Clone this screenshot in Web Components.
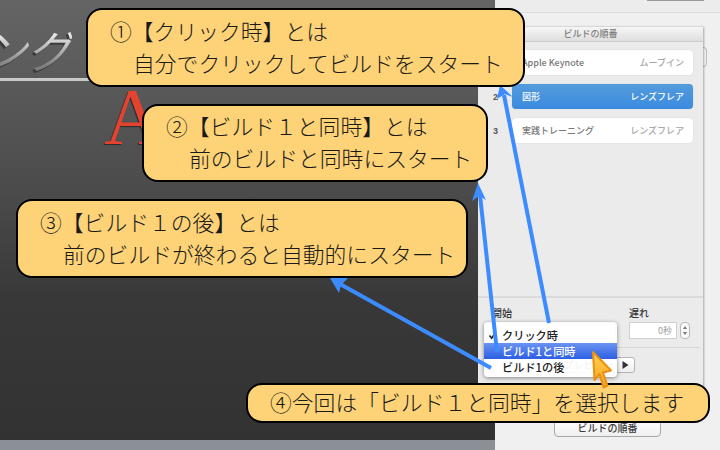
<!DOCTYPE html>
<html lang="ja">
<head>
<meta charset="utf-8">
<title>ビルドの順番</title>
<style>
  html, body { margin: 0; padding: 0; background: #8b9097; }
  body { font-family: "Noto Sans CJK JP", "Noto Sans", sans-serif; }
</style>
</head>
<body>
<guide-page>
  <slide-pane></slide-pane>
  <side-pane></side-pane>
  <build-panel>
    <build-row slot="rows" index="" title="Apple Keynote" effect="ムーブイン"></build-row>
    <build-row slot="rows" index="2" title="図形" effect="レンズフレア" active></build-row>
    <build-row slot="rows" index="3" title="実践トレーニング" effect="レンズフレア"></build-row>
  </build-panel>
  <guide-arrows></guide-arrows>
  <guide-note style="left:86px;top:8px;width:439px;height:79px">
    <span>①【クリック時】とは</span>
    <span slot="detail">自分でクリックしてビルドをスタート</span>
  </guide-note>
  <guide-note style="left:142px;top:104px;width:346px;height:78px">
    <span>②【ビルド１と同時】とは</span>
    <span slot="detail">前のビルドと同時にスタート</span>
  </guide-note>
  <guide-note style="left:16px;top:199px;width:452px;height:79px">
    <span>③【ビルド１の後】とは</span>
    <span slot="detail">前のビルドが終わると自動的にスタート</span>
  </guide-note>
  <guide-note style="left:246px;top:383px;width:464px;height:40px">
    <span>④今回は「ビルド１と同時」を選択します</span>
  </guide-note>
  <guide-cursor></guide-cursor>
</guide-page>

<script>
const define = (name, element) => {
  if (!customElements.get(name)) {
    customElements.define(name, element);
  }
};

class ShadowPart extends HTMLElement {
  connectedCallback() {
    if (this.shadowRoot) return;
    this.attachShadow({ mode: "open" }).innerHTML = this.render();
  }
}

class GuidePage extends ShadowPart {
  render() {
    return `
      <style>
        :host {
          display: grid;
          grid-template-columns: 495px 225px;
          position: relative;
          width: 720px;
          height: 450px;
          overflow: hidden;
        }
      </style>
      <slot></slot>
    `;
  }
}

class SlidePane extends ShadowPart {
  render() {
    return `
      <style>
        :host {
          display: block;
          position: relative;
          height: 450px;
          background: #8b9097;
          overflow: hidden;
        }
        .slide {
          position: absolute;
          inset: 0 0 10px 0;
          background: linear-gradient(180deg, #656565 0, #4b4b4b 190px, #383838 300px, #323232 100%);
        }
        .title {
          position: absolute;
          left: -18px;
          top: 20px;
          font: italic 400 45px/58px "Noto Sans CJK JP", sans-serif;
          background: linear-gradient(180deg, #e8e8e8 25%, #7c7c7c 80%);
          -webkit-background-clip: text;
          background-clip: text;
          color: transparent;
          filter: drop-shadow(-2px 2px 0 #3a3a3a);
        }
        .rule {
          position: absolute;
          left: 0;
          right: 0;
          top: 78px;
          height: 3px;
          background: #c9c9c9;
        }
        .letter {
          position: absolute;
          left: 104px;
          top: 71px;
          font: 400 80px/92px "Liberation Serif", serif;
          color: #e4432f;
          text-shadow: -1px 1px 1px #2b2b2b;
        }
      </style>
      <div class="slide">
        <div class="title">ング</div>
        <div class="rule"></div>
        <div class="letter">A</div>
      </div>
    `;
  }
}

class SidePane extends ShadowPart {
  render() {
    return `
      <style>
        :host {
          display: flex;
          flex-direction: column;
          height: 450px;
          background: #f0f0f0;
          box-sizing: border-box;
        }
        .strip {
          height: 12px;
          background: #ececec;
          border-bottom: 1px solid #dcdcdc;
        }
        .tab {
          margin-left: 152px;
          width: 57px;
          height: 1px;
          background: #9a9a9a;
        }
        .fill { flex: 1; }
        button {
          align-self: center;
          box-sizing: border-box;
          width: 107px;
          height: 18px;
          margin-bottom: 13px;
          padding: 0;
          border: 1px solid #a9a9a9;
          border-radius: 4px;
          background: linear-gradient(180deg, #ffffff, #efefef);
          color: #3a3a3a;
          font: 500 10px/14px "Noto Sans CJK JP", sans-serif;
        }
        .stub {
          position: absolute;
          left: 703px;
          top: 47px;
          width: 3px;
          height: 18px;
          border: 1px solid #bdbdbd;
          border-left: 0;
          border-radius: 0 4px 4px 0;
          background: #f3f3f3;
        }
      </style>
      <div class="strip"><div class="tab"></div></div>
      <div class="stub"></div>
      <div class="fill"></div>
      <button type="button">ビルドの順番</button>
    `;
  }
}

class BuildPanel extends ShadowPart {
  render() {
    return `
      <style>
        :host {
          position: absolute;
          left: 478px;
          top: 27px;
          width: 225px;
          height: 378px;
          display: flex;
          flex-direction: column;
          box-sizing: border-box;
          background: #ebebeb;
          box-shadow: 1px 0 2px rgba(0, 0, 0, 0.3);
          color: #333;
          font: 400 9px/12px "Noto Sans CJK JP", sans-serif;
        }
        .head {
          height: 14px;
          line-height: 14px;
          text-align: center;
          color: #7d7d7d;
          font-weight: 500;
          background: linear-gradient(180deg, #f6f6f6, #dfdfdf);
          border-bottom: 1px solid #cbcbcb;
        }
        .rows {
          display: flex;
          flex-direction: column;
          gap: 9px;
          padding: 8px 10px 0 0;
        }
        .timing {
          margin-top: auto;
          border-top: 2px solid #dadada;
          padding: 8px 0 0 6px;
          height: 109px;
          box-sizing: border-box;
          display: grid;
          grid-template-columns: 132px 48px 10px;
          grid-template-rows: 13px 17px auto auto;
          align-content: start;
          column-gap: 13px;
          row-gap: 3px;
        }
        .label {
          font: 500 10px/13px "Noto Sans CJK JP", sans-serif;
          color: #333;
          padding-left: 8px;
        }
        .label.delay { padding-left: 0; grid-column: 2 / 4; }
        .popup {
          position: relative;
          box-sizing: border-box;
          border: 1px solid #b5b5b5;
          border-radius: 4px;
          background: #fff;
        }
        .delay-field {
          box-sizing: border-box;
          border: 1px solid #d0d0d0;
          background: #fff;
          color: #9d9d9d;
          font-size: 9px;
          line-height: 15px;
          text-align: right;
          padding-right: 4px;
        }
        .stepper {
          box-sizing: border-box;
          margin-left: -10px;
          width: 10px;
          border: 1px solid #b9b9b9;
          border-radius: 4px;
          background: #f8f8f8;
        }
        .stepper svg { display: block; }
        .line {
          grid-column: 1 / 4;
          height: 1px;
          background: #d8d8d8;
          margin: 5px 0 0 8px;
        }
        .preview {
          grid-column: 1 / 3;
          display: flex;
          height: 16px;
          width: 145px;
          margin: 6px 0 0 6px;
          box-sizing: border-box;
          border: 1px solid #b5b5b5;
          border-radius: 3px;
          background: linear-gradient(180deg, #fff, #efefef);
        }
        .preview span { flex: 1; text-align: center; padding-left: 70px; line-height: 14px; font-size: 10px; color: #444; }
        .preview i {
          width: 17px;
          border-left: 1px solid #b5b5b5;
          display: flex;
          align-items: center;
          justify-content: center;
        }
        .menu {
          position: absolute;
          left: -1px;
          top: -1px;
          width: 133px;
          height: 55px;
          box-sizing: border-box;
          padding-top: 5px;
          border-radius: 4px;
          background: rgba(255, 255, 255, 0.93);
          box-shadow: 0 1px 4px rgba(0, 0, 0, 0.45);
          font: 500 11.2px/16px "Noto Sans CJK JP", sans-serif;
          color: #222;
        }
        .menu div { position: relative; height: 16px; padding-left: 18px; }
        .menu .on {
          color: #fff;
          background: linear-gradient(180deg, #6a93f2, #2c5fe3);
        }
        .menu svg { position: absolute; left: 4px; top: 4px; }
      </style>
      <div class="head">ビルドの順番</div>
      <div class="rows"><slot name="rows"></slot></div>
      <div class="timing">
        <div class="label">開始</div>
        <div class="label delay">遅れ</div>
        <div class="popup">
          <div class="menu">
            <div>
              <svg width="9" height="9" viewBox="0 0 9 9"><path d="M1.5 4.5 L3.6 7.2 L7.6 1.5" fill="none" stroke="#222" stroke-width="1.6"/></svg>
              クリック時
            </div>
            <div class="on">ビルド1と同時</div>
            <div>ビルド1の後</div>
          </div>
        </div>
        <div class="delay-field">0秒</div>
        <div class="stepper">
          <svg width="8" height="15" viewBox="0 0 8 15"><path d="M4 3 L6 6 L2 6 Z M4 12 L6 9 L2 9 Z" fill="#777"/></svg>
        </div>
        <div class="line"></div>
        <div class="preview">
          <span>プレビュー</span>
          <i><svg width="7" height="8" viewBox="0 0 7 8"><path d="M0.5 0 L6.5 4 L0.5 8 Z" fill="#333"/></svg></i>
        </div>
      </div>
    `;
  }
}

class BuildRow extends ShadowPart {
  render() {
    return `
      <style>
        :host {
          display: flex;
          align-items: center;
          height: 25px;
          font: 500 9px/12px "Noto Sans CJK JP", "Liberation Sans", sans-serif;
        }
        .index {
          width: 34px;
          box-sizing: border-box;
          padding-left: 15px;
          font: 700 9px/12px "Liberation Sans", sans-serif;
          color: #555;
        }
        .card {
          flex: 1;
          height: 25px;
          display: flex;
          align-items: center;
          justify-content: space-between;
          padding: 0 9px 0 10px;
          border-radius: 4px;
          background: #fff;
          color: #777;
          box-shadow: 0 0 1px rgba(0, 0, 0, 0.2);
        }
        .effect { color: #a8a8a8; }
        :host([active]) .card {
          background: linear-gradient(180deg, #539cdb, #3a8ae0);
          color: #fff;
        }
        :host([active]) .effect { color: #fff; }
      </style>
      <span class="index">${this.getAttribute("index") ?? ""}</span>
      <div class="card">
        <span>${this.getAttribute("title") ?? ""}</span>
        <span class="effect">${this.getAttribute("effect") ?? ""}</span>
      </div>
    `;
  }
}

class GuideArrows extends ShadowPart {
  render() {
    return `
      <style>
        :host { position: absolute; inset: 0; pointer-events: none; }
        svg { display: block; }
        line { stroke: #3d8cff; stroke-width: 4; }
        polygon { fill: #3d8cff; }
      </style>
      <svg width="720" height="450" viewBox="0 0 720 450">
        <line x1="549" y1="323" x2="504" y2="95"/>
        <polygon points="500,85 513,97 505,94 497,99"/>
        <line x1="497" y1="352" x2="480" y2="195"/>
        <polygon points="478,183 486,200 479,196 472,201"/>
        <line x1="491" y1="368" x2="340" y2="284"/>
        <polygon points="330,278 348,278 341,285 339,293"/>
      </svg>
    `;
  }
}

class GuideNote extends ShadowPart {
  render() {
    return `
      <style>
        :host {
          position: absolute;
          display: flex;
          flex-direction: column;
          justify-content: center;
          box-sizing: border-box;
          padding: 0 0 2px 22px;
          border: 2px solid #000;
          border-radius: 16px;
          background: #fed377;
          color: #1a1a1a;
          font: 300 21.8px/32px "Noto Sans CJK JP", sans-serif;
          white-space: nowrap;
        }
        .detail { padding-left: 23px; }
      </style>
      <div><slot></slot></div>
      <div class="detail"><slot name="detail"></slot></div>
    `;
  }
}

class GuideCursor extends ShadowPart {
  render() {
    return `
      <style>
        :host { position: absolute; left: 588px; top: 348px; width: 28px; height: 44px; }
        svg { display: block; }
      </style>
      <svg width="28" height="44" viewBox="588 348 28 44">
        <defs>
          <linearGradient id="fill" x1="0" y1="0" x2="0" y2="1">
            <stop offset="0" stop-color="#ffd24d"/>
            <stop offset="1" stop-color="#f7a21b"/>
          </linearGradient>
        </defs>
        <polygon points="593,352 594.5,380 599.5,374 603.5,387.5 607.5,385.5 603,372.5 611,370.5"
          fill="url(#fill)" stroke="#ea8f10" stroke-width="2" stroke-linejoin="round"/>
      </svg>
    `;
  }
}

const registrations = [
  ["guide-page", GuidePage],
  ["slide-pane", SlidePane],
  ["side-pane", SidePane],
  ["build-panel", BuildPanel],
  ["build-row", BuildRow],
  ["guide-arrows", GuideArrows],
  ["guide-note", GuideNote],
  ["guide-cursor", GuideCursor]
];

for (const [name, element] of registrations) {
  define(name, element);
}
</script>
</body>
</html>
